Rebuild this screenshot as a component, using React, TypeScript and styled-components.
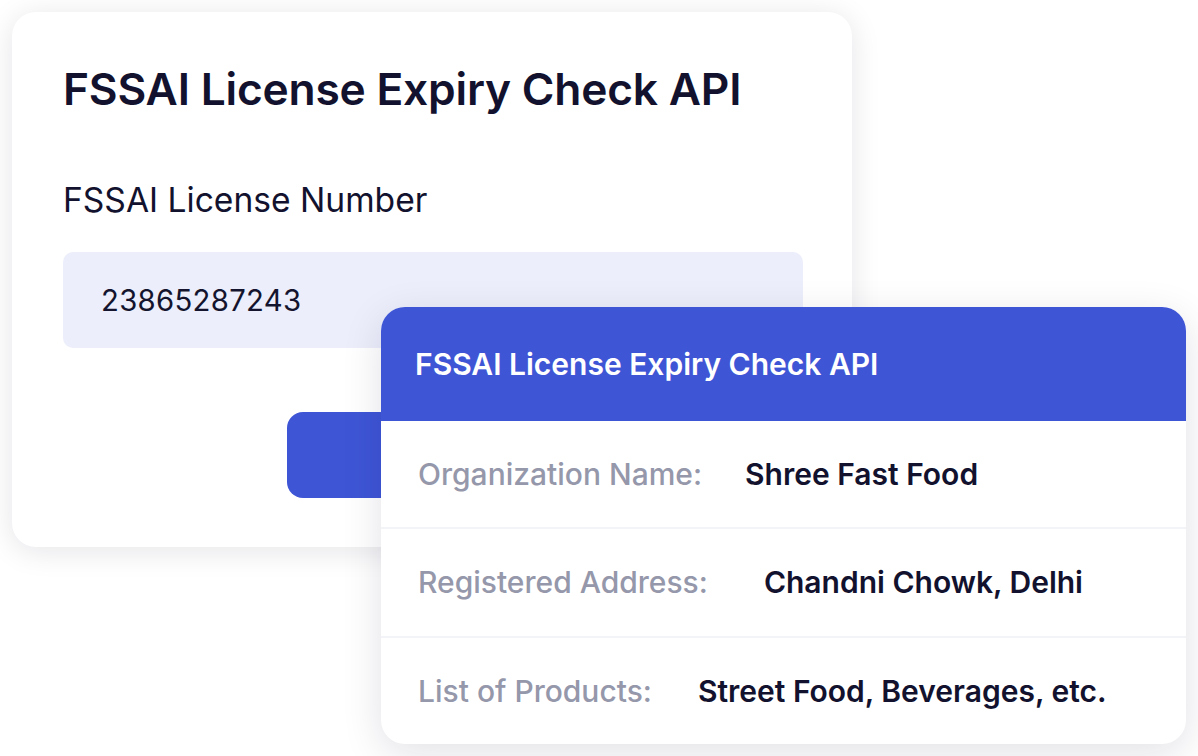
import React from 'react'
import styled, { createGlobalStyle } from 'styled-components'

const GlobalStyle = createGlobalStyle`
	html, body {
		margin: 0;
		padding: 0;
		background: #ffffff;
	}
	body {
		font-family: 'Inter', 'Noto Sans', sans-serif;
		-webkit-font-smoothing: antialiased;
	}
`

const Stage = styled.div`
	position: relative;
	width: 1198px;
	height: 756px;
	padding: 12px;
	box-sizing: border-box;
	overflow: hidden;
`

const FormCard = styled.div`
	width: 840px;
	height: 535px;
	box-sizing: border-box;
	padding: 50px 49px 0 51px;
	background: #ffffff;
	border-radius: 24px;
	box-shadow: 0 4px 30px rgba(20, 20, 50, 0.11);
	display: flex;
	flex-direction: column;
`

const FormTitle = styled.h1`
	margin: 0;
	font-size: 44.3px;
	line-height: 54px;
	font-weight: 600;
	color: #12122e;
	letter-spacing: -0.2px;
`

const FieldLabel = styled.label`
	margin-top: 63px;
	font-size: 33.6px;
	line-height: 41px;
	font-weight: 400;
	color: #12122e;
`

const InputBox = styled.div`
	margin-top: 32px;
	height: 96px;
	border-radius: 10px;
	background: #eceefb;
	display: flex;
	align-items: center;
	padding-left: 38px;
	font-size: 29.3px;
	color: #14142e;
	letter-spacing: 0.3px;
`

const SubmitButton = styled.button`
	margin-top: 64px;
	margin-left: 224px;
	height: 86px;
	border: none;
	border-radius: 16px;
	background: #3e55d6;
	color: #ffffff;
	font-family: inherit;
	font-size: 29px;
	font-weight: 600;
`

const ResultCard = styled.div`
	position: absolute;
	left: 381px;
	top: 307px;
	width: 805px;
	height: 437px;
	background: #ffffff;
	border-radius: 24px;
	box-shadow: 0 10px 40px rgba(20, 20, 60, 0.12);
	overflow: hidden;
	display: flex;
	flex-direction: column;
`

const ResultHeader = styled.div`
	height: 114px;
	flex-shrink: 0;
	background: #3e55d6;
	display: flex;
	align-items: center;
	padding-left: 34px;
	font-size: 30px;
	font-weight: 600;
	color: #ffffff;
`

const ResultRow = styled.div<{ $last?: boolean }>`
	flex: 1;
	display: flex;
	align-items: center;
	padding-left: 37px;
	border-bottom: ${(p) => (p.$last ? 'none' : '2px solid #f2f4f8')};
	font-size: 30px;
`

const RowLabel = styled.span`
	color: #9597aa;
	font-weight: 500;
`

const RowValue = styled.span<{ $gap: number }>`
	margin-left: ${(p) => p.$gap}px;
	color: #12122e;
	font-weight: 600;
`

const rows = [
	{ label: 'Organization Name:', value: 'Shree Fast Food', gap: 43 },
	{ label: 'Registered Address:', value: 'Chandni Chowk, Delhi', gap: 56 },
	{ label: 'List of Products:', value: 'Street Food, Beverages, etc.', gap: 46 },
]

export default function App() {
	return (
		<>
			<GlobalStyle />
			<Stage>
				<FormCard>
					<FormTitle>FSSAI License Expiry Check API</FormTitle>
					<FieldLabel>FSSAI License Number</FieldLabel>
					<InputBox>23865287243</InputBox>
					<SubmitButton>Submit Request Now</SubmitButton>
				</FormCard>
				<ResultCard>
					<ResultHeader>FSSAI License Expiry Check API</ResultHeader>
					{rows.map((row, index) => (
						<ResultRow key={index} $last={index === rows.length - 1}>
							<RowLabel>{row.label}</RowLabel>
							<RowValue $gap={row.gap}>{row.value}</RowValue>
						</ResultRow>
					))}
				</ResultCard>
			</Stage>
		</>
	)
}
